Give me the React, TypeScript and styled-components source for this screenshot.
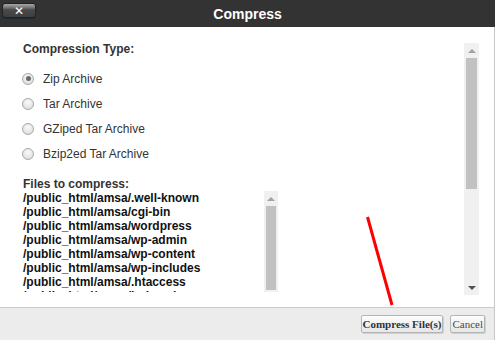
import styled, { createGlobalStyle } from 'styled-components';

const GlobalStyle = createGlobalStyle`
	html, body {
		margin: 0;
		padding: 0;
		background: #fff;
	}
`;

const Dialog = styled.div`
	position: relative;
	display: flex;
	flex-direction: column;
	width: 495px;
	height: 340px;
	overflow: hidden;
	font-family: 'Liberation Sans', Arial, sans-serif;
`;

const TitleBar = styled.div`
	display: grid;
	grid-template-columns: 1fr auto 1fr;
	align-items: center;
	height: 27px;
	background: #333333;
	flex-shrink: 0;
`;

const CloseButton = styled.button`
	justify-self: start;
	align-self: start;
	display: flex;
	align-items: center;
	justify-content: center;
	width: 34px;
	height: 15px;
	margin: 3px 0 0 2px;
	padding: 0;
	border: 1px solid #222;
	border-radius: 3px;
	background: linear-gradient(#a8a8a8 0%, #7a7a7a 25%, #4a4a4a 45%, #3e3e3e 100%);
	box-shadow: 0 1px 0 #1d2a33;
	color: #fff;
	font-family: 'DejaVu Sans', sans-serif;
	font-weight: bold;
	font-size: 12px;
	line-height: 1;
	cursor: pointer;
`;

const Title = styled.div`
	color: #fff;
	font-size: 14px;
	font-weight: bold;
`;

const Body = styled.div`
	display: flex;
	flex: 1;
	background: #fff;
	border-right: 1px solid #c8c8c8;
`;

const Content = styled.div`
	flex: 1;
	padding: 15px 0 0 23px;
`;

const Heading = styled.div`
	color: #333;
	font-size: 12px;
	font-weight: bold;
	line-height: 14px;
`;

const RadioList = styled.div<{ $top: number; $bottom: number }>`
	display: flex;
	flex-direction: column;
	margin: ${(p) => p.$top}px 0 ${(p) => p.$bottom}px;
`;

const RadioRow = styled.label`
	display: flex;
	align-items: center;
	height: 25px;
	color: #333;
	font-size: 12px;
`;

const RadioDot = styled.span<{ $checked?: boolean }>`
	position: relative;
	box-sizing: border-box;
	width: 12px;
	height: 12px;
	margin: 0 9px 0 -1px;
	border: 1px solid #a9a9a9;
	border-radius: 50%;
	background: radial-gradient(circle at 50% 35%, #fafafa 0%, #e2e2e2 70%, #d2d2d2 100%);

	&::after {
		content: '';
		display: ${(p) => (p.$checked ? 'block' : 'none')};
		position: absolute;
		left: 2.5px;
		top: 2.5px;
		width: 5px;
		height: 5px;
		border-radius: 50%;
		background: #6a6a6a;
	}
`;

const FileBox = styled.div`
	display: flex;
	width: 256px;
	height: 101px;
	margin-left: -1px;
`;

const FileList = styled.ul`
	flex: 1;
	margin: 0;
	padding: 0 0 0 1px;
	list-style: none;
	overflow: hidden;
`;

const FileItem = styled.li`
	color: #111;
	font-size: 12px;
	font-weight: bold;
	line-height: 14px;
	white-space: nowrap;
`;

const ScrollTrack = styled.div<{ $width: number; $margin: string }>`
	display: flex;
	flex-direction: column;
	width: ${(p) => p.$width}px;
	margin: ${(p) => p.$margin};
	background: #f0f0f0;
	flex-shrink: 0;
`;

const ArrowCell = styled.div`
	display: flex;
	align-items: center;
	justify-content: center;
	height: 15px;
	flex-shrink: 0;
`;

const ArrowUp = styled.span`
	width: 0;
	height: 0;
	border-left: 4px solid transparent;
	border-right: 4px solid transparent;
	border-bottom: 4px solid #a3a3a3;
`;

const ArrowDown = styled.span`
	width: 0;
	height: 0;
	border-left: 4px solid transparent;
	border-right: 4px solid transparent;
	border-top: 4px solid #505050;
`;

const Thumb = styled.div<{ $height: number }>`
	height: ${(p) => p.$height}px;
	margin: 0 2px;
	background: #c1c1c1;
	flex-shrink: 0;
`;

const Spacer = styled.div`
	flex: 1;
`;

const Footer = styled.div`
	display: flex;
	align-items: center;
	justify-content: flex-end;
	gap: 7px;
	height: 32px;
	padding-right: 9px;
	background: #ececec;
	border-top: 1px solid #cccccc;
	border-right: 1px solid #c8c8c8;
	flex-shrink: 0;
`;

const FooterButton = styled.button<{ $primary?: boolean }>`
	height: 18px;
	padding: 0 1px;
	border: 1px solid #b5b5b5;
	border-radius: 2px;
	background: linear-gradient(#fdfdfd, #e6e6e6);
	color: ${(p) => (p.$primary ? '#2f3338' : '#4a4a4a')};
	font-family: 'Liberation Serif', 'Times New Roman', serif;
	font-size: 11px;
	font-weight: ${(p) => (p.$primary ? 'bold' : 'normal')};
	line-height: 16px;
	box-shadow: 1px 1px 0 #d0d0d0;
	cursor: pointer;
`;

const Annotation = styled.svg`
	position: absolute;
	left: 0;
	top: 0;
	pointer-events: none;
`;

const types = ['Zip Archive', 'Tar Archive', 'GZiped Tar Archive', 'Bzip2ed Tar Archive'];

const files = [
	'/public_html/amsa/.well-known',
	'/public_html/amsa/cgi-bin',
	'/public_html/amsa/wordpress',
	'/public_html/amsa/wp-admin',
	'/public_html/amsa/wp-content',
	'/public_html/amsa/wp-includes',
	'/public_html/amsa/.htaccess',
	'/public_html/amsa/index.php',
];

export default function App() {
	return (
		<>
			<GlobalStyle />
			<Dialog>
				<TitleBar>
					<CloseButton>✕</CloseButton>
					<Title>Compress</Title>
					<span />
				</TitleBar>
				<Body>
					<Content>
						<Heading>Compression Type:</Heading>
						<RadioList $top={10} $bottom={11}>
							{types.map((t, i) => (
								<RadioRow key={t}>
									<RadioDot $checked={i === 0} />
									{t}
								</RadioRow>
							))}
						</RadioList>
						<Heading>Files to compress:</Heading>
						<FileBox>
							<FileList>
								{files.map((f) => (
									<FileItem key={f}>{f}</FileItem>
								))}
							</FileList>
							<ScrollTrack $width={14} $margin="0">
								<ArrowCell>
									<ArrowUp />
								</ArrowCell>
								<Thumb $height={84} />
								<Spacer />
							</ScrollTrack>
						</FileBox>
					</Content>
					<ScrollTrack $width={15} $margin="16px 15px 12px 0">
						<ArrowCell>
							<ArrowUp />
						</ArrowCell>
						<Thumb $height={131} />
						<Spacer />
						<ArrowCell>
							<ArrowDown />
						</ArrowCell>
					</ScrollTrack>
				</Body>
				<Footer>
					<FooterButton $primary>Compress File(s)</FooterButton>
					<FooterButton>Cancel</FooterButton>
				</Footer>
				<Annotation width="495" height="340">
					<line x1="367.5" y1="217" x2="392" y2="305" stroke="#ff0000" strokeWidth="3" />
				</Annotation>
			</Dialog>
		</>
	);
}
